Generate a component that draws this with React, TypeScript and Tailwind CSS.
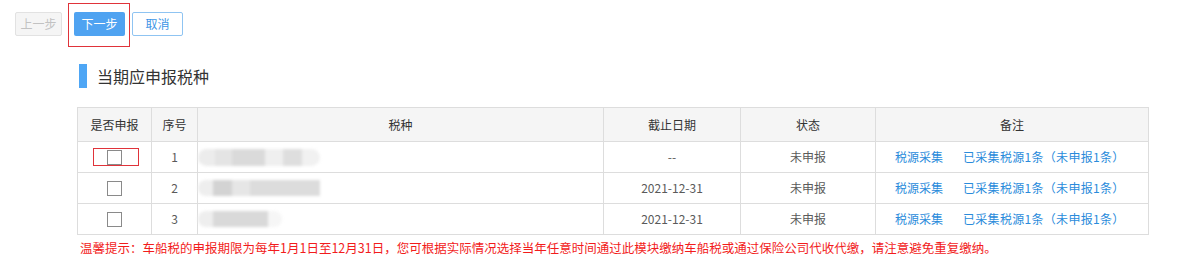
import { JSX } from "react";

type Row = {
  no: number;
  blob: JSX.Element;
  deadline: string;
};

const Blob1 = () => (
  <div className="flex h-[17px] w-[122px] blur-[1.5px]">
    <div className="w-[17px] rounded-l-full bg-[#ececec]" />
    <div className="w-[17px] bg-[#e4e4e4]" />
    <div className="w-[33px] bg-[#dadada]" />
    <div className="w-[18px] bg-[#efefef]" />
    <div className="w-[19px] bg-[#dedede]" />
    <div className="w-[18px] rounded-r-full bg-[#f1f1f1]" />
  </div>
);

const Blob2 = () => (
  <div className="flex h-[16px] w-[122px] blur-[1.5px]">
    <div className="w-[15px] rounded-l-full bg-[#eeeeee]" />
    <div className="w-[19px] bg-[#d3d3d3]" />
    <div className="w-[18px] bg-[#e6e6e6]" />
    <div className="w-[70px] bg-[#dcdcdc]" />
  </div>
);

const Blob3 = () => (
  <div className="flex h-[16px] w-[84px] blur-[1.5px]">
    <div className="w-[15px] rounded-l-full bg-[#eeeeee]" />
    <div className="w-[55px] bg-[#d9d9d9]" />
    <div className="w-[14px] rounded-r-full bg-[#f6f6f6]" />
  </div>
);

const rows: Row[] = [
  { no: 1, blob: <Blob1 />, deadline: "--" },
  { no: 2, blob: <Blob2 />, deadline: "2021-12-31" },
  { no: 3, blob: <Blob3 />, deadline: "2021-12-31" },
];

const App = () => {
  return (
    <div
      className="w-[1200px] h-[271px] bg-white overflow-hidden text-[12px] text-[#5a5a5a]"
      style={{ fontFamily: '"Noto Sans CJK SC", "Noto Sans", sans-serif' }}
    >
      {/* toolbar */}
      <div className="flex items-center pl-[15px] pt-[12px]">
        <button className="h-[24px] w-[47px] border border-[#e2e2e2] bg-[#f5f5f5] text-[#c2c2c2] rounded-[2px] leading-none">
          上一步
        </button>
        <div className="relative ml-[12px]">
          <button className="h-[24px] w-[51px] bg-[#4fa3f1] text-white rounded-[2px] leading-none">
            下一步
          </button>
          <div className="absolute left-[-6px] top-[-9px] w-[62px] h-[44px] border border-[#e0333a]" />
        </div>
        <button className="ml-[7px] h-[24px] w-[51px] border border-[#8fc4f2] bg-white text-[#3d95e6] rounded-[2px] leading-none">
          取消
        </button>
      </div>

      {/* heading */}
      <div className="flex items-center ml-[79px] mt-[28px] h-[24px]">
        <div className="w-[8px] h-[24px] bg-[#4ea6f5]" />
        <h2 className="ml-[10px] text-[16px] text-[#333]">当期应申报税种</h2>
      </div>

      {/* table */}
      <table className="ml-[77px] mt-[19px] w-[1071px] border-collapse table-fixed">
        <colgroup>
          <col className="w-[74px]" />
          <col className="w-[46px]" />
          <col className="w-[406px]" />
          <col className="w-[137px]" />
          <col className="w-[135px]" />
          <col className="w-[273px]" />
        </colgroup>
        <thead>
          <tr className="h-[34px] bg-[#f5f5f5] text-[#333]">
            <th className="border border-[#dddddd] font-normal">是否申报</th>
            <th className="border border-[#dddddd] font-normal">序号</th>
            <th className="border border-[#dddddd] font-normal">税种</th>
            <th className="border border-[#dddddd] font-normal">截止日期</th>
            <th className="border border-[#dddddd] font-normal">状态</th>
            <th className="border border-[#dddddd] font-normal">备注</th>
          </tr>
        </thead>
        <tbody>
          {rows.map((r) => (
            <tr key={r.no} className="h-[31px]">
              <td className="border border-[#dddddd] p-0">
                <div className="relative flex justify-center">
                  <div className="w-[15px] h-[15px] border border-[#8a8a8a] bg-white" />
                  {r.no === 1 && (
                    <div className="absolute left-[15px] top-[-2px] w-[46px] h-[18px] border border-[#e0333a]" />
                  )}
                </div>
              </td>
              <td className="border border-[#dddddd] text-center">{r.no}</td>
              <td className="border border-[#dddddd] p-0">{r.blob}</td>
              <td className="border border-[#dddddd] text-center">{r.deadline}</td>
              <td className="border border-[#dddddd] text-center">未申报</td>
              <td className="border border-[#dddddd] text-[#2a8bdb]">
                <span className="ml-[19px]">税源采集</span>
                <span className="ml-[20px] tracking-[0.3px]">已采集税源1条（未申报1条）</span>
              </td>
            </tr>
          ))}
        </tbody>
      </table>

      <p className="ml-[80px] mt-[4px] text-[12.5px] text-[#f21c1c]">
        温馨提示：车船税的申报期限为每年1月1日至12月31日，您可根据实际情况选择当年任意时间通过此模块缴纳车船税或通过保险公司代收代缴，请注意避免重复缴纳。
      </p>
    </div>
  );
};

export default App;
